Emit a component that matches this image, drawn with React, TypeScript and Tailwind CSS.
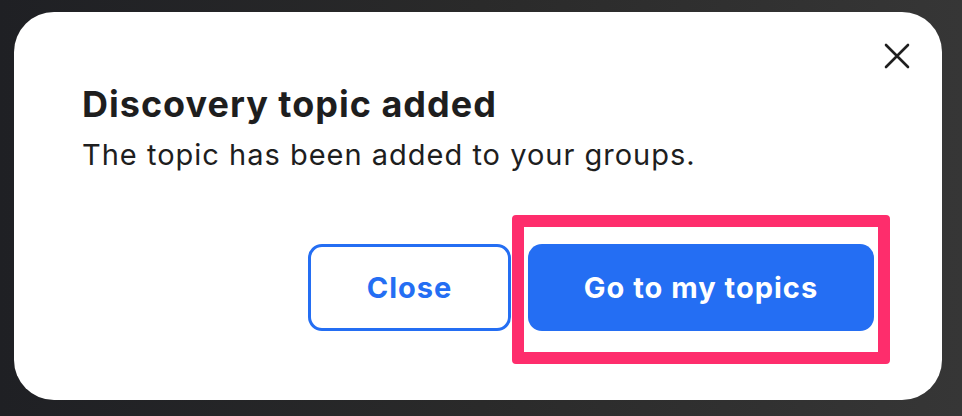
import React from 'react';

const CloseIcon = () => (
  <svg width="26" height="26" viewBox="0 0 26 26" fill="none" stroke="#1f1f1f" strokeWidth={2.6} strokeLinecap="round">
    <path d="M2 2L24 24M24 2L2 24" />
  </svg>
);

export default function App() {
  return (
    <div
      className="w-[962px] h-[416px] overflow-hidden bg-gradient-to-r from-[#1f2024] via-[#2a2a2a] to-[#363636] pt-[12px] pl-[14px]"
      style={{ fontFamily: 'Inter, "Noto Sans", sans-serif' }}
    >
      <div className="relative w-[928px] h-[388px] bg-white rounded-[40px] px-[68px] pt-[72px]">
        <button className="absolute top-[31px] right-[32px] p-0" aria-label="Close dialog">
          <CloseIcon />
        </button>

        <h2 className="text-[36px] leading-[40px] font-bold tracking-[1px] text-[#1e1e1e]">
          Discovery topic added
        </h2>
        <p className="mt-[15px] text-[29px] leading-[32px] tracking-[1px] text-[#1e1e1e]">
          The topic has been added to your groups.
        </p>

        <div className="mt-[73px] flex justify-end gap-[17px]">
          <button className="w-[203px] h-[87px] rounded-[14px] border-[3px] border-[#246ef3] bg-white text-[#246ef3] text-[29px] tracking-[1px] font-bold">
            Close
          </button>
          <div className="relative">
            <button className="w-[346px] h-[87px] rounded-[14px] bg-[#246ef3] text-white text-[29px] tracking-[1px] font-bold">
              Go to my topics
            </button>
            <div className="pointer-events-none absolute left-[-16px] top-[-29px] w-[378px] h-[149px] border-[12px] border-[#fe2d6c] rounded-[4px]" />
          </div>
        </div>
      </div>
    </div>
  );
}
